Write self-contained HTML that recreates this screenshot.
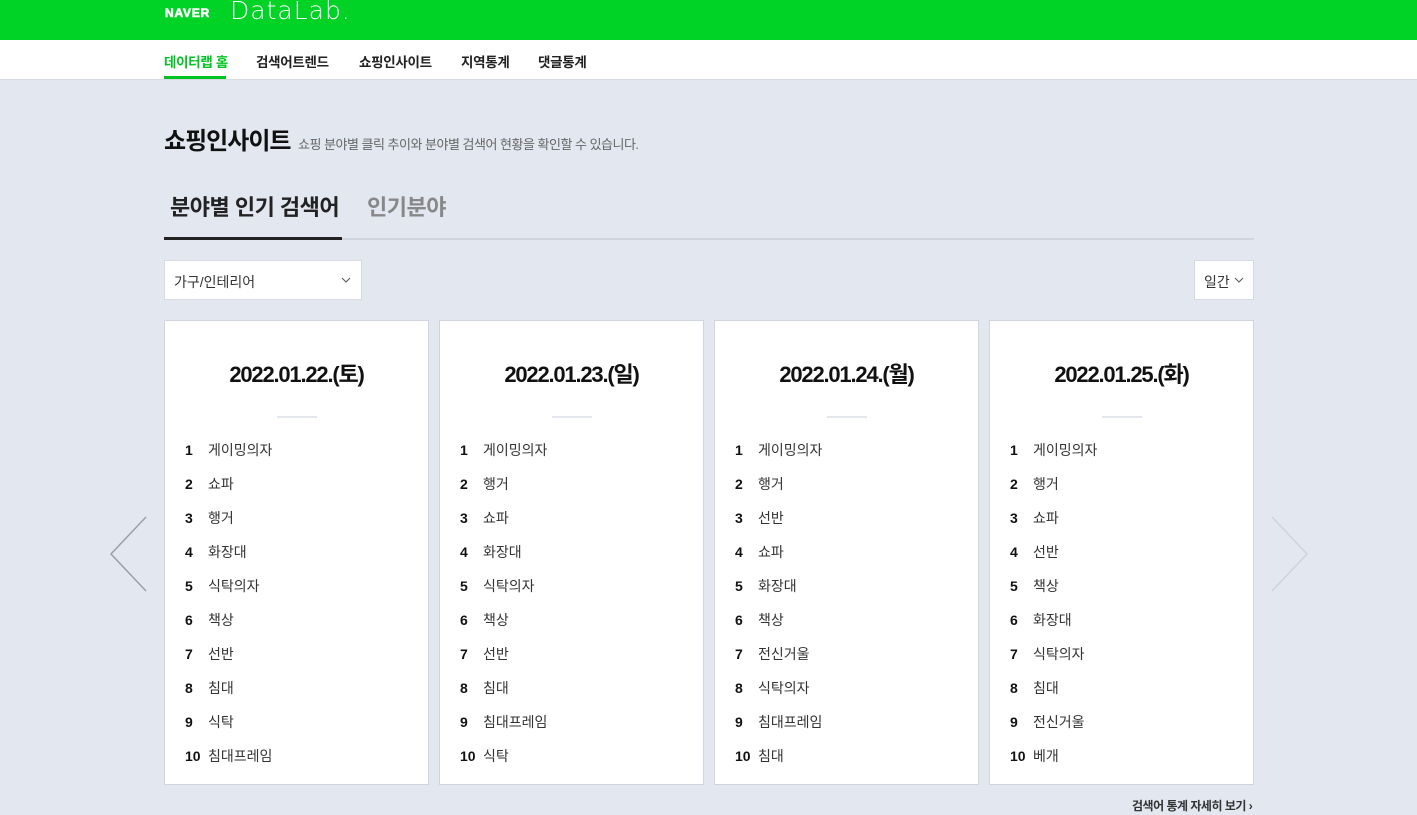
<!DOCTYPE html>
<html><head><meta charset="utf-8"><style>
*{margin:0;padding:0;box-sizing:border-box}
body{width:1417px;height:815px;overflow:hidden;background:#e3e7f0;font-family:"Liberation Sans","Noto Sans CJK KR",sans-serif;position:relative;color:#222}
.top{position:absolute;left:0;top:0;width:1417px;height:40px;background:#00d326}
.naver{position:absolute;left:165px;top:6px;color:#fff;font-weight:900;font-size:12px;letter-spacing:0.8px;-webkit-text-stroke:0.6px #fff}
.dl{position:absolute;left:230px;top:-4px;color:#fff;font-size:25px;font-weight:300;letter-spacing:1px;font-family:"DejaVu Sans","Liberation Sans",sans-serif}
.nav{position:absolute;left:0;top:40px;width:1417px;height:40px;background:#fff;border-bottom:1px solid #d5d9e1}
.nav a{position:absolute;top:11px;font-size:13.5px;font-weight:bold;color:#222;text-decoration:none;letter-spacing:-0.3px}
.nav a.on{color:#00c321}
.nav .bar{position:absolute;left:164px;top:36px;width:62px;height:3px;background:#00c321}
h1{position:absolute;left:164px;top:121px;font-size:24px;font-weight:bold;color:#111;letter-spacing:-1px}
.sub{position:absolute;left:298px;top:134px;font-size:13px;color:#666;letter-spacing:-0.5px}
.tab1{position:absolute;left:170px;top:190px;font-size:22px;font-weight:bold;color:#222;letter-spacing:-0.5px}
.tab2{position:absolute;left:367px;top:190px;font-size:22px;font-weight:bold;color:#888;letter-spacing:-0.5px}
.tline{position:absolute;left:164px;top:238px;width:1090px;height:2px;background:#d0d4dc}
.tact{position:absolute;left:164px;top:237px;width:178px;height:3px;background:#222}
.sel{position:absolute;left:164px;top:260px;width:198px;height:40px;background:#fff;border:1px solid #d5d9e1;font-size:14px;padding:11px 9px;color:#333}
.sel2{position:absolute;left:1194px;top:260px;width:60px;height:40px;background:#fff;border:1px solid #d5d9e1;font-size:14px;padding:11px 9px;color:#333}
.card{position:absolute;top:320px;width:265px;height:465px;background:#fff;border:1px solid #cfd4de}
.date{position:absolute;top:36px;left:0;width:100%;text-align:center;font-size:22px;font-weight:bold;letter-spacing:-1.2px;color:#111}
.div{position:absolute;left:112px;top:95px;width:40px;height:2px;background:#e4e7ed}
ol{list-style:none;position:absolute;left:20px;top:119px}
li{height:34px;font-size:14px;color:#333}
li b{display:inline-block;width:23px;color:#111}
.arr{position:absolute;top:515px}
.more{position:absolute;left:1132px;top:797px;font-size:12px;font-weight:bold;color:#333;letter-spacing:-0.5px}
</style></head><body>
<div class="top"><div class="naver">NAVER</div><div class="dl">DataLab.</div></div>
<div class="nav"><a class="on" style="left:164px">데이터랩 홈</a><a style="left:256px">검색어트렌드</a><a style="left:359px">쇼핑인사이트</a><a style="left:461px">지역통계</a><a style="left:538px">댓글통계</a><div class="bar"></div></div>
<h1>쇼핑인사이트</h1><div class="sub">쇼핑 분야별 클릭 추이와 분야별 검색어 현황을 확인할 수 있습니다.</div>
<div class="tab1">분야별 인기 검색어</div><div class="tab2">인기분야</div>
<div class="tline"></div><div class="tact"></div>
<div class="sel">가구/인테리어<svg style="position:absolute;right:10px;top:16px" width="10" height="6"><path d="M1 1L5 5L9 1" stroke="#555" fill="none"/></svg></div>
<div class="sel2">일간<svg style="position:absolute;right:9px;top:16px" width="10" height="6"><path d="M1 1L5 5L9 1" stroke="#555" fill="none"/></svg></div>
<div class="card" style="left:164px"><div class="date">2022.01.22.(토)</div><div class="div"></div><ol>
<li><b>1</b>게이밍의자</li><li><b>2</b>쇼파</li><li><b>3</b>행거</li><li><b>4</b>화장대</li><li><b>5</b>식탁의자</li><li><b>6</b>책상</li><li><b>7</b>선반</li><li><b>8</b>침대</li><li><b>9</b>식탁</li><li><b>10</b>침대프레임</li></ol></div>
<div class="card" style="left:439px"><div class="date">2022.01.23.(일)</div><div class="div"></div><ol>
<li><b>1</b>게이밍의자</li><li><b>2</b>행거</li><li><b>3</b>쇼파</li><li><b>4</b>화장대</li><li><b>5</b>식탁의자</li><li><b>6</b>책상</li><li><b>7</b>선반</li><li><b>8</b>침대</li><li><b>9</b>침대프레임</li><li><b>10</b>식탁</li></ol></div>
<div class="card" style="left:714px"><div class="date">2022.01.24.(월)</div><div class="div"></div><ol>
<li><b>1</b>게이밍의자</li><li><b>2</b>행거</li><li><b>3</b>선반</li><li><b>4</b>쇼파</li><li><b>5</b>화장대</li><li><b>6</b>책상</li><li><b>7</b>전신거울</li><li><b>8</b>식탁의자</li><li><b>9</b>침대프레임</li><li><b>10</b>침대</li></ol></div>
<div class="card" style="left:989px"><div class="date">2022.01.25.(화)</div><div class="div"></div><ol>
<li><b>1</b>게이밍의자</li><li><b>2</b>행거</li><li><b>3</b>쇼파</li><li><b>4</b>선반</li><li><b>5</b>책상</li><li><b>6</b>화장대</li><li><b>7</b>식탁의자</li><li><b>8</b>침대</li><li><b>9</b>전신거울</li><li><b>10</b>베개</li></ol></div>
<svg class="arr" style="left:108px" width="40" height="78"><path d="M38 2L3 39L38 76" stroke="#9aa0aa" stroke-width="1.5" fill="none"/></svg>
<svg class="arr" style="left:1270px" width="40" height="78"><path d="M2 2L37 39L2 76" stroke="#cfd3db" stroke-width="1.5" fill="none"/></svg>
<div class="more">검색어 통계 자세히 보기 ›</div>
</body></html>
